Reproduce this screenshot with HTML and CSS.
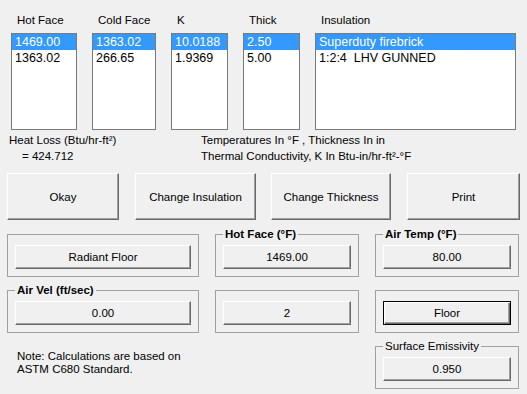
FILE: index.html
```html
<!DOCTYPE html>
<html lang="en">
<head>
  <meta charset="UTF-8">
  <title>Heat Loss</title>
  <link rel="stylesheet" href="styles.css">
</head>
<body>
<div class="app">
  <!-- list columns -->
  <div class="lists">
    <div class="col w1">
      <div class="cap">Hot Face</div>
      <ul class="listbox">
        <li class="sel">1469.00</li>
        <li>1363.02</li>
      </ul>
    </div>
    <div class="col w2">
      <div class="cap">Cold Face</div>
      <ul class="listbox">
        <li class="sel">1363.02</li>
        <li>266.65</li>
      </ul>
    </div>
    <div class="col w3">
      <div class="cap">K</div>
      <ul class="listbox">
        <li class="sel">10.0188</li>
        <li>1.9369</li>
      </ul>
    </div>
    <div class="col w4">
      <div class="cap">Thick</div>
      <ul class="listbox">
        <li class="sel">2.50</li>
        <li>5.00</li>
      </ul>
    </div>
    <div class="col w5">
      <div class="cap">Insulation</div>
      <ul class="listbox">
        <li class="sel">Superduty firebrick</li>
        <li>1:2:4&nbsp; LHV GUNNED</li>
      </ul>
    </div>
  </div>

  <div class="info">
    <div class="loss">
      <div>Heat Loss (Btu/hr-ft²)</div>
      <div class="val">= 424.712</div>
    </div>
    <div class="units">
      <div>Temperatures In °F , Thickness In in</div>
      <div>Thermal Conductivity, K In Btu-in/hr-ft²-°F</div>
    </div>
  </div>

  <div class="actions">
    <button class="btn big b1">Okay</button>
    <button class="btn big b2">Change Insulation</button>
    <button class="btn big b3">Change Thickness</button>
    <button class="btn big b4">Print</button>
  </div>

  <div class="groups">
    <div class="group">
      <button class="btn">Radiant Floor</button>
    </div>
    <div class="group">
      <span class="legend bold">Hot Face (°F)</span>
      <button class="btn">1469.00</button>
    </div>
    <div class="group">
      <span class="legend bold">Air Temp (°F)</span>
      <button class="btn">80.00</button>
    </div>

    <div class="group">
      <span class="legend bold">Air Vel (ft/sec)</span>
      <button class="btn">0.00</button>
    </div>
    <div class="group">
      <button class="btn">2</button>
    </div>
    <div class="group">
      <button class="btn focus">Floor</button>
    </div>

    <div class="note">
      Note: Calculations are based on<br>
      ASTM C680 Standard.
    </div>
    <div></div>
    <div class="group">
      <span class="legend">Surface Emissivity</span>
      <button class="btn">0.950</button>
    </div>
  </div>
</div>
</body>
</html>
```

FILE: styles.css
```css
*{
    margin: 0;
    padding: 0;
    box-sizing: border-box;
}
body{
    background: #f0f0f0;
    font-family: "Liberation Sans", Arial, sans-serif;
    font-size: 11.5px;
    color: #000;
}
.app{
    width: 527px;
    height: 394px;
}
.lists{
    display: flex;
    gap: 15px;
    padding: 13px 0 0 11px;
}
.cap{
    height: 14px;
    line-height: 14px;
    margin-bottom: 6px;
    padding-left: 6px;
}
.w1{ width: 66px; }
.w2{ width: 64px; }
.w3{ width: 57px; }
.w4{ width: 57px; }
.w5{ width: 201px; }
.listbox{
    list-style: none;
    height: 97px;
    background: #fff;
    border: 1px solid #7a7a7a;
    font-size: 12.5px;
}
.listbox li{
    height: 16px;
    line-height: 16px;
    padding-left: 3px;
    white-space: nowrap;
}
.listbox li.sel{
    background: #3399ff;
    color: #fff;
}
.info{
    display: flex;
    padding: 2px 0 0 9px;
    line-height: 16px;
}
.loss{
    width: 192px;
}
.loss .val{
    padding-left: 13px;
}
.actions{
    display: flex;
    gap: 16px;
    padding: 9px 0 0 7px;
}
.actions .b3{ margin-left: -1px; }
.btn{
    display: block;
    background: #f0f0f0;
    font-family: inherit;
    font-size: 11.5px;
    color: #000;
    border: 1px solid;
    border-color: #fff #696969 #696969 #fff;
    box-shadow: inset -1px -1px #a0a0a0;
    height: 24px;
    width: 100%;
}
.btn.big{
    height: 47px;
}
.b1{ width: 112px; }
.b2{ width: 121px; }
.b3{ width: 120px; }
.b4{ width: 113px; }
.btn.focus{
    border-color: #000;
    box-shadow: inset 1px 1px #fff, inset -1px -1px #696969, inset -2px -2px #a0a0a0;
}
.groups{
    display: grid;
    grid-template-columns: 192px 144px 144px;
    grid-auto-rows: 43px;
    column-gap: 16px;
    row-gap: 13px;
    padding: 14px 0 0 7px;
}
.group{
    position: relative;
    border: 1px solid #a0a0a0;
    padding: 10px 7px 0 7px;
}
.legend{
    position: absolute;
    top: -8px;
    left: 7px;
    padding: 0 2px;
    background: #f0f0f0;
    line-height: 14px;
}
.bold{
    font-weight: bold;
}
.note{
    padding: 4px 0 0 10px;
    line-height: 13px;
}
```
